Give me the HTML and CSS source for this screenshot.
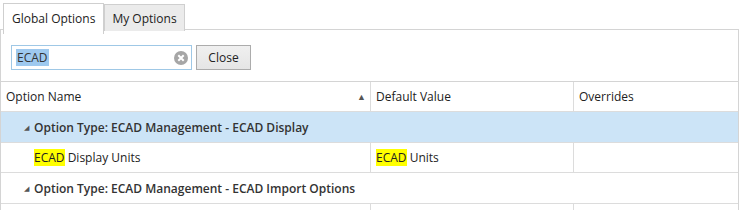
FILE: index.html
```html
<!DOCTYPE html>
<html lang="en">
<head>
    <meta charset="UTF-8">
    <title>Options</title>
    <link rel="stylesheet" href="styles.css">
</head>
<body>
    <div class="tabs">
        <div class="tab active">Global Options</div>
        <div class="tab">My Options</div>
    </div>
    <div class="panel">
        <div class="toolbar">
            <div class="search">
                <span class="selected">ECAD</span>
                <span class="clear">
                    <svg width="14" height="14" viewBox="0 0 14 14">
                        <circle cx="7" cy="7" r="7" fill="#a6a6a6"/>
                        <path d="M4.3 4.3 L9.7 9.7 M9.7 4.3 L4.3 9.7" stroke="#fff" stroke-width="2"/>
                    </svg>
                </span>
            </div>
            <button class="btn">Close</button>
        </div>
        <div class="grid">
            <div class="row header">
                <div class="cell name"><span>Option Name</span><span class="sort">&#9650;</span></div>
                <div class="cell value"><span>Default Value</span></div>
                <div class="cell over"><span>Overrides</span></div>
            </div>
            <div class="row group selected-row">
                <div class="cell full"><span class="caret">&#9698;</span><span>Option Type: ECAD Management - ECAD Display</span></div>
            </div>
            <div class="row">
                <div class="cell name indent"><span><mark>ECAD</mark> Display Units</span></div>
                <div class="cell value"><span><mark>ECAD</mark> Units</span></div>
                <div class="cell over"></div>
            </div>
            <div class="row group">
                <div class="cell full"><span class="caret">&#9698;</span><span>Option Type: ECAD Management - ECAD Import Options</span></div>
            </div>
            <div class="row filler">
                <div class="cell name"></div>
                <div class="cell value"></div>
                <div class="cell over"></div>
            </div>
        </div>
    </div>
</body>
</html>
```

FILE: styles.css
```css
body {
    margin: 0;
    font-family: 'Open Sans', 'Noto Sans', Arial, sans-serif;
    font-size: 12px;
    color: #222;
    background: #fff;
}
.tabs {
    display: flex;
    padding: 3px 0 0 3px;
    height: 26px;
}
.tab {
    border: 1px solid #cfcfcf;
    border-bottom: none;
    padding: 5px 7px 0 7px;
    background: #ebebeb;
    margin-top: 1px;
    height: 21px;
}
.tab.active {
    background: #fff;
    margin-top: 0;
    height: 24px;
    position: relative;
    z-index: 1;
    padding: 6px 8px 0 8px;
}
.panel {
    border: 1px solid #d4d4d4;
    border-bottom: none;
    margin-right: 1px;
}
.toolbar {
    display: flex;
    gap: 4px;
    padding: 15px 0 11px 10px;
}
.search {
    width: 181px;
    height: 25px;
    box-sizing: border-box;
    border: 1px solid #9fc8e6;
    display: flex;
    align-items: center;
    padding: 0 3px 0 4px;
}
.selected {
    background: #9ec9ef;
    color: #333;
    line-height: 17px;
    padding: 0 1px;
}
.clear {
    margin-left: auto;
    display: flex;
}
.btn {
    font: inherit;
    width: 55px;
    height: 25px;
    border: 1px solid #acacac;
    background: linear-gradient(#f0f0f0, #e5e5e5);
    color: #222;
    padding: 0;
}
.grid {
    border-top: 1px solid #d4d4d4;
}
.row {
    display: flex;
    height: 30px;
    border-bottom: 1px solid #dcdcdc;
    box-sizing: border-box;
}
.row.filler {
    height: 6px;
    border-bottom: none;
}
.cell {
    display: flex;
    align-items: center;
    padding-left: 5px;
    box-sizing: border-box;
}
.cell.name {
    width: 370px;
    border-right: 1px solid #dcdcdc;
}
.cell.name.indent {
    padding-left: 33px;
}
.cell.value {
    width: 203px;
    border-right: 1px solid #dcdcdc;
}
.cell.over {
    flex: 1;
}
.sort {
    margin-left: auto;
    margin-right: 4px;
    font-size: 9px;
    color: #555;
}
.row.group {
    height: 31px;
}
.cell.full {
    flex: 1;
    padding-left: 23px;
    font-weight: 600;
    color: #333;
}
.selected-row {
    background: #cce4f7;
}
.caret {
    font-size: 7px;
    color: #555;
    margin-right: 5px;
    font-weight: normal;
}
mark {
    background: #ffff00;
    color: #222;
}
```
